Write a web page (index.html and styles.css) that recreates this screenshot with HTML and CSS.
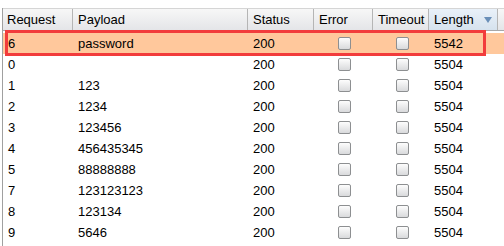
FILE: index.html
```html
<!DOCTYPE html>
<html lang="en">
<head>
    <meta charset="UTF-8">
    <title>Intruder Results</title>
    <link rel="stylesheet" href="styles.css">
</head>
<body>
    <div class="results">
        <div class="row header">
            <div class="cell">Request</div>
            <div class="cell">Payload</div>
            <div class="cell">Status</div>
            <div class="cell">Error</div>
            <div class="cell">Timeout</div>
            <div class="cell sorted">Length <span class="arrow"></span></div>
            <div class="cell filler"></div>
        </div>
        <div class="row selected">
            <div class="cell">6</div>
            <div class="cell">password</div>
            <div class="cell">200</div>
            <div class="cell check"><span class="box"></span></div>
            <div class="cell check"><span class="box"></span></div>
            <div class="cell">5542</div>
            <div class="cell"></div>
        </div>
        <div class="row">
            <div class="cell">0</div>
            <div class="cell"></div>
            <div class="cell">200</div>
            <div class="cell check"><span class="box"></span></div>
            <div class="cell check"><span class="box"></span></div>
            <div class="cell">5504</div>
            <div class="cell"></div>
        </div>
        <div class="row">
            <div class="cell">1</div>
            <div class="cell">123</div>
            <div class="cell">200</div>
            <div class="cell check"><span class="box"></span></div>
            <div class="cell check"><span class="box"></span></div>
            <div class="cell">5504</div>
            <div class="cell"></div>
        </div>
        <div class="row">
            <div class="cell">2</div>
            <div class="cell">1234</div>
            <div class="cell">200</div>
            <div class="cell check"><span class="box"></span></div>
            <div class="cell check"><span class="box"></span></div>
            <div class="cell">5504</div>
            <div class="cell"></div>
        </div>
        <div class="row">
            <div class="cell">3</div>
            <div class="cell">123456</div>
            <div class="cell">200</div>
            <div class="cell check"><span class="box"></span></div>
            <div class="cell check"><span class="box"></span></div>
            <div class="cell">5504</div>
            <div class="cell"></div>
        </div>
        <div class="row">
            <div class="cell">4</div>
            <div class="cell">456435345</div>
            <div class="cell">200</div>
            <div class="cell check"><span class="box"></span></div>
            <div class="cell check"><span class="box"></span></div>
            <div class="cell">5504</div>
            <div class="cell"></div>
        </div>
        <div class="row">
            <div class="cell">5</div>
            <div class="cell">88888888</div>
            <div class="cell">200</div>
            <div class="cell check"><span class="box"></span></div>
            <div class="cell check"><span class="box"></span></div>
            <div class="cell">5504</div>
            <div class="cell"></div>
        </div>
        <div class="row">
            <div class="cell">7</div>
            <div class="cell">123123123</div>
            <div class="cell">200</div>
            <div class="cell check"><span class="box"></span></div>
            <div class="cell check"><span class="box"></span></div>
            <div class="cell">5504</div>
            <div class="cell"></div>
        </div>
        <div class="row">
            <div class="cell">8</div>
            <div class="cell">123134</div>
            <div class="cell">200</div>
            <div class="cell check"><span class="box"></span></div>
            <div class="cell check"><span class="box"></span></div>
            <div class="cell">5504</div>
            <div class="cell"></div>
        </div>
        <div class="row">
            <div class="cell">9</div>
            <div class="cell">5646</div>
            <div class="cell">200</div>
            <div class="cell check"><span class="box"></span></div>
            <div class="cell check"><span class="box"></span></div>
            <div class="cell">5504</div>
            <div class="cell"></div>
        </div>
        <!-- highlight drawn over the first result -->
        <div class="marker"></div>
    </div>
</body>
</html>
```

FILE: styles.css
```css
body {
    margin: 0;
    font-family: "Liberation Sans", Arial, sans-serif;
    font-size: 13px;
    color: #000;
    background-color: #fff;
}
.results {
    position: relative;
    margin: 8px 0 0 2px;
    border-left: 1px solid #a0a0a0;
    height: 238px;
}
.row {
    display: grid;
    grid-template-columns: 70px 175px 66px 59px 56px 69px 1fr;
    height: 21px;
}
.cell {
    padding-left: 5px;
    line-height: 21px;
    white-space: nowrap;
    overflow: hidden;
}
.header {
    height: 23px;
    border-top: 1px solid #d5d5d5;
    border-bottom: 1px solid #a8a8a8;
    box-sizing: border-box;
    margin-bottom: 2px;
}
.header .cell {
    line-height: 21px;
    background: linear-gradient(#f7f7f7, #e4e5e8);
    border-right: 1px solid #b5b5b5;
}
.header .cell:first-child {
    padding-left: 4px;
}
.header .cell.sorted {
    background: linear-gradient(#e9f1f9, #d6e2ee);
    position: relative;
}
.header .cell.filler {
    border-right: none;
}
.arrow {
    position: absolute;
    right: 5px;
    top: 8px;
    border-left: 4px solid transparent;
    border-right: 4px solid transparent;
    border-top: 6px solid #6a8fb8;
}
.selected {
    background-color: #ffc89c;
}
.check {
    display: flex;
    align-items: center;
    justify-content: center;
    padding-left: 2px;
}
.box {
    display: block;
    width: 11px;
    height: 11px;
    border: 1px solid #8d8f91;
    border-radius: 2px;
    background: linear-gradient(#fdfdfd, #d9dadc);
}
.marker {
    position: absolute;
    left: 2px;
    top: 22px;
    width: 475px;
    height: 20px;
    border: 3px solid #f23c3c;
}
```
